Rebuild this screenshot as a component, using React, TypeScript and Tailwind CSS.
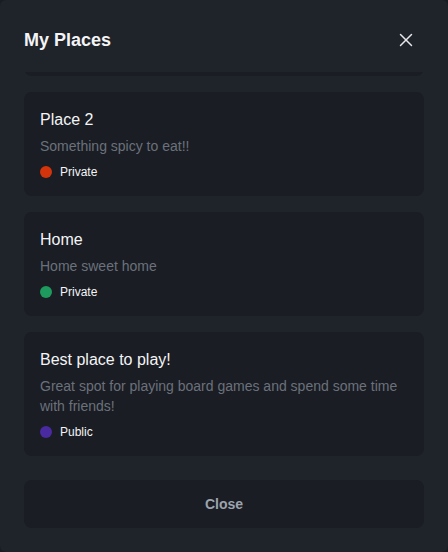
import { useEffect, useRef } from 'react';
import { X } from 'lucide-react';

interface Place {
  id: string;
  name: string;
  description: string;
  visibility: 'Private' | 'Public';
  color: string;
}

const places: Place[] = [
  { id: '1', name: 'Place 1', description: 'A quiet corner to read a book', visibility: 'Public', color: 'bg-[#2563eb]' },
  { id: '2', name: 'Place 2', description: 'Something spicy to eat!!', visibility: 'Private', color: 'bg-[#d4340c]' },
  { id: '3', name: 'Home', description: 'Home sweet home', visibility: 'Private', color: 'bg-[#1f9a5f]' },
  {
    id: '4',
    name: 'Best place to play!',
    description: 'Great spot for playing board games and spend some time with friends!',
    visibility: 'Public',
    color: 'bg-[#4a2aa0]',
  },
];

function PlaceCard({ place }: { place: Place }) {
  return (
    <div className="rounded-lg bg-[#1a1d23] p-4">
      <h3 className="text-base leading-6 text-[#f3f4f6]">{place.name}</h3>
      <p className="mt-1 text-sm leading-5 text-[#6b717c]">{place.description}</p>
      <div className="mt-2 flex items-center gap-2">
        <span className={`h-3 w-3 rounded-full ${place.color}`} />
        <span className="text-xs leading-4 text-[#f3f4f6]">{place.visibility}</span>
      </div>
    </div>
  );
}

export default function App() {
  const listRef = useRef<HTMLDivElement>(null);

  // the list is shown scrolled to its end
  useEffect(() => {
    if (listRef.current) listRef.current.scrollTop = listRef.current.scrollHeight;
  }, []);

  return (
    <div className="h-[552px] w-[448px] bg-[#191c22] font-['Liberation_Sans',Arial,sans-serif]">
      <div className="flex h-full flex-col rounded-md bg-[#1f232a]">
        <div className="flex items-center justify-between px-6 pb-4 pt-6">
          <h2 className="text-lg font-bold leading-8 text-[#f3f4f6]">My Places</h2>
          <button className="mr-1.5 flex h-6 w-6 items-center justify-center text-[#e5e7eb]" aria-label="Close">
            <X size={22} strokeWidth={1.6} />
          </button>
        </div>

        <div ref={listRef} className="min-h-0 flex-1 overflow-hidden">
          <div className="space-y-4 px-6 pb-2">
            {places.map(place => (
              <PlaceCard key={place.id} place={place} />
            ))}
          </div>
        </div>

        <div className="px-6 pb-6 pt-4">
          <button className="h-12 w-full rounded-lg bg-[#1a1d23] text-sm font-bold text-[#9ca3af]">
            Close
          </button>
        </div>
      </div>
    </div>
  );
}
